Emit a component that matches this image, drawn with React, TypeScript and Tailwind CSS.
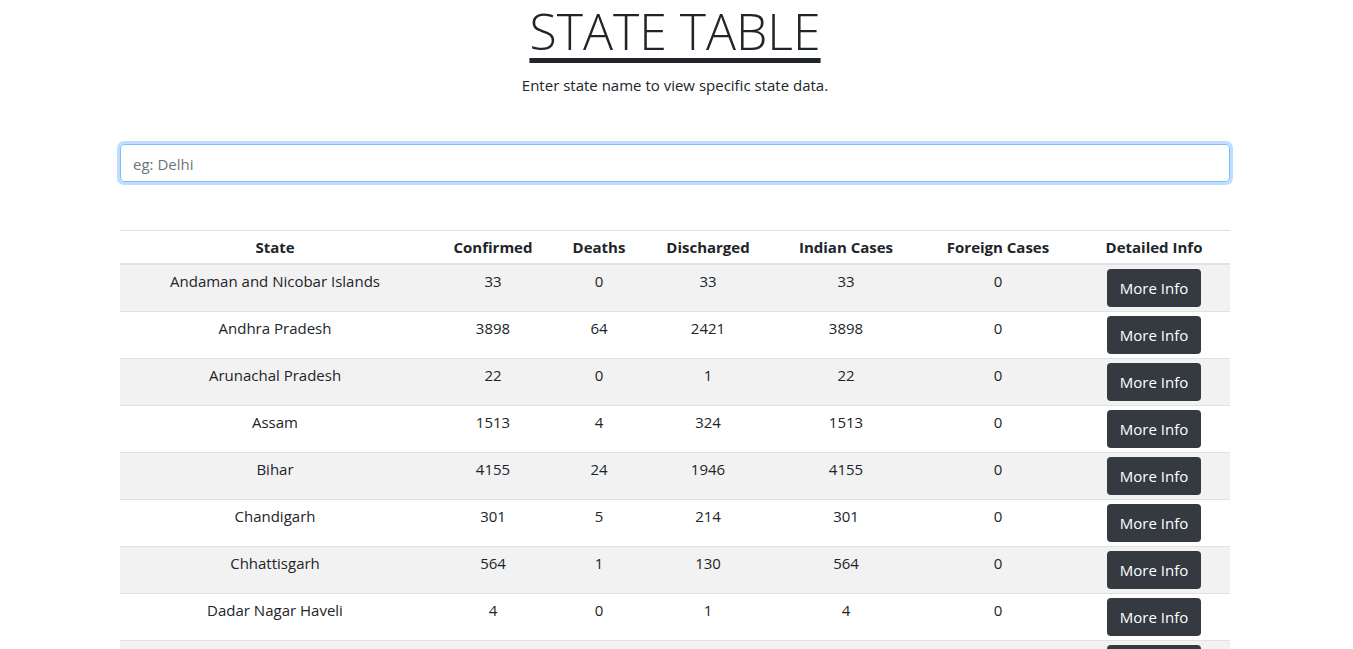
import React from 'react';

type Row = {
  state: string;
  confirmed: number;
  deaths: number;
  discharged: number;
  indian: number;
  foreign: number;
};

const rows: Row[] = [
  { state: 'Andaman and Nicobar Islands', confirmed: 33, deaths: 0, discharged: 33, indian: 33, foreign: 0 },
  { state: 'Andhra Pradesh', confirmed: 3898, deaths: 64, discharged: 2421, indian: 3898, foreign: 0 },
  { state: 'Arunachal Pradesh', confirmed: 22, deaths: 0, discharged: 1, indian: 22, foreign: 0 },
  { state: 'Assam', confirmed: 1513, deaths: 4, discharged: 324, indian: 1513, foreign: 0 },
  { state: 'Bihar', confirmed: 4155, deaths: 24, discharged: 1946, indian: 4155, foreign: 0 },
  { state: 'Chandigarh', confirmed: 301, deaths: 5, discharged: 214, indian: 301, foreign: 0 },
  { state: 'Chhattisgarh', confirmed: 564, deaths: 1, discharged: 130, indian: 564, foreign: 0 },
  { state: 'Dadar Nagar Haveli', confirmed: 4, deaths: 0, discharged: 1, indian: 4, foreign: 0 },
  { state: 'Delhi', confirmed: 22132, deaths: 556, discharged: 9243, indian: 22132, foreign: 0 },
  { state: 'Goa', confirmed: 79, deaths: 0, discharged: 57, indian: 79, foreign: 0 },
  { state: 'Gujarat', confirmed: 17200, deaths: 1063, discharged: 11380, indian: 17200, foreign: 0 },
  { state: 'Haryana', confirmed: 2652, deaths: 21, discharged: 1055, indian: 2652, foreign: 0 },
];

const StateTable = () => {
  return (
    <div className="w-[1110px] ml-[120px] text-[#212529]">
      {/* heading */}
      <div className="text-center">
        <h1 className="text-[50px] font-light leading-[60px] mt-[1px]">
          <span className="underline decoration-[5px] underline-offset-[8px]">STATE TABLE</span>
        </h1>
        <p className="text-[15px] mt-[12px]">Enter state name to view specific state data.</p>
      </div>

      {/* search */}
      <div className="mt-[47px]">
        <input
          type="text"
          placeholder="eg: Delhi"
          className="w-full h-[38px] px-3 pt-[1px] text-[15px] rounded border border-[#80bdff] shadow-[0_0_0_3px_rgba(0,123,255,0.25)] outline-none placeholder:text-[#6c757d]"
        />
      </div>

      {/* table */}
      <table className="w-full mt-[48px] border-collapse text-center text-[15px]">
        <thead>
          <tr className="border-t border-[#dee2e6] border-b-2">
            <th className="w-[310px] py-[4px] font-bold">State</th>
            <th className="w-[126px] py-[4px] font-bold">Confirmed</th>
            <th className="w-[86px] py-[4px] font-bold">Deaths</th>
            <th className="w-[132px] py-[4px] font-bold">Discharged</th>
            <th className="w-[144px] py-[4px] font-bold">Indian Cases</th>
            <th className="w-[160px] py-[4px] font-bold">Foreign Cases</th>
            <th className="w-[152px] py-[4px] font-bold">Detailed Info</th>
          </tr>
        </thead>
        <tbody>
          {rows.map((r, i) => (
            <tr
              key={r.state}
              className={`border-t border-[#dee2e6] align-top ${i % 2 === 0 ? 'bg-[#f2f2f2]' : 'bg-white'}`}
            >
              <td className="py-[4px]">{r.state}</td>
              <td className="py-[4px]">{r.confirmed}</td>
              <td className="py-[4px]">{r.deaths}</td>
              <td className="py-[4px]">{r.discharged}</td>
              <td className="py-[4px]">{r.indian}</td>
              <td className="py-[4px]">{r.foreign}</td>
              <td className="py-[4px]">
                <button className="h-[38px] px-[13px] rounded bg-[#343a40] text-white text-[15px]">
                  More Info
                </button>
              </td>
            </tr>
          ))}
        </tbody>
      </table>
    </div>
  );
};

export default function App() {
  return (
    <div className="min-h-screen bg-white font-['Open_Sans',sans-serif] leading-6">
      <StateTable />
    </div>
  );
}
